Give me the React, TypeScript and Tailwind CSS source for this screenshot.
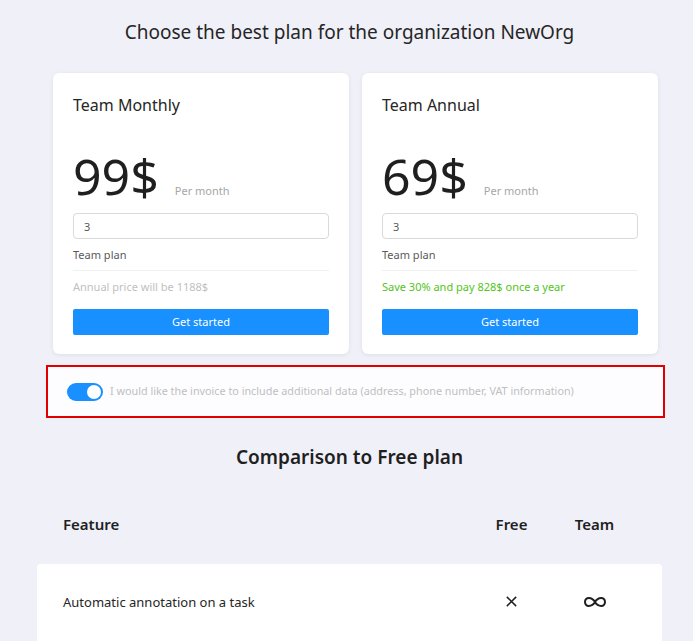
import React, { useState } from 'react';

const font = { fontFamily: '"Noto Sans", "Open Sans", sans-serif' };

interface PlanCardProps {
  title: string;
  price: string;
  note: string;
  noteClass: string;
}

function PlanCard({ title, price, note, noteClass }: PlanCardProps) {
  return (
    <div className="flex-1 bg-white rounded-md shadow-[0_1px_4px_rgba(0,0,0,0.08)] px-5 pt-[19px] pb-[19px]">
      <div className="text-[16px] leading-[26px] text-[#262626]">{title}</div>
      <div className="flex items-end mt-[23px] h-[64px]">
        <span className="text-[50px] leading-[52px] text-[#1f1f1f] mb-[3px]">{price}</span>
        <span className="text-[11px] text-[#a6a6a6] ml-[16px] mb-[6px]">Per month</span>
      </div>
      <input
        defaultValue="3"
        className="mt-[8px] w-full h-[26px] border border-[#d9d9d9] rounded-[4px] px-[10px] text-[11px] text-[#595959] outline-none"
      />
      <div className="text-[11px] leading-[18px] text-[#595959] mt-[7px] pb-[6px] border-b border-[#f0f0f0]">Team plan</div>
      <div className={`text-[11px] leading-[18px] mt-[7px] ${noteClass}`}>{note}</div>
      <button className="mt-[13px] w-full h-[26px] bg-[#1890ff] text-white text-[11px] rounded-[2px]">Get started</button>
    </div>
  );
}

export default function App() {
  const [checked, setChecked] = useState(true);

  return (
    <div className="min-h-screen bg-[#f0f0f8] overflow-hidden" style={font}>
      <div className="ml-[37px] w-[625px] pt-[18px]">
        <h1 className="text-center text-[19px] leading-[28px] text-[#262626]">
          Choose the best plan for the organization NewOrg
        </h1>
      </div>

      <div className="ml-[53px] w-[605px] mt-[27px] flex gap-[13px]">
        <PlanCard
          title="Team Monthly"
          price="99$"
          note="Annual price will be 1188$"
          noteClass="text-[#bfbfbf]"
        />
        <PlanCard
          title="Team Annual"
          price="69$"
          note="Save 30% and pay 828$ once a year"
          noteClass="text-[#52c41a]"
        />
      </div>

      <div className="ml-[46px] w-[619px] mt-[11px] h-[53px] border-2 border-[#e00000] flex items-center px-[19px] bg-[#fdfdff]">
        <button
          onClick={() => setChecked(!checked)}
          className={`relative w-[36px] h-[18px] rounded-full ${checked ? 'bg-[#1890ff]' : 'bg-[#bfbfbf]'}`}
        >
          <span className={`absolute top-[2px] w-[14px] h-[14px] rounded-full bg-white ${checked ? 'right-[2px]' : 'left-[2px]'}`} />
        </button>
        <span className="ml-[7px] text-[10.8px] text-[#bfbfbf]">
          I would like the invoice to include additional data (address, phone number, VAT information)
        </span>
      </div>

      <div className="ml-[37px] w-[625px]">
        <h2 className="text-center text-[19px] leading-[28px] font-semibold text-[#1f1f1f] mt-[25px]">
          Comparison to Free plan
        </h2>

        <div className="flex items-center h-[42px] mt-[32px] px-[26px] text-[15px] font-semibold text-[#1f1f1f]">
          <div className="flex-1">Feature</div>
          <div className="w-[83px] text-center">Free</div>
          <div className="w-[83px] text-center">Team</div>
        </div>

        <div className="mt-[19px] bg-white rounded-[4px] h-[90px] flex items-start pt-[26px] px-[26px] text-[13px] text-[#262626]">
          <div className="flex-1 leading-[24px]">Automatic annotation on a task</div>
          <div className="w-[83px] flex justify-center pt-[5px]">
            <svg width="13" height="13" viewBox="0 0 14 14" fill="none" stroke="#1f1f1f" strokeWidth="1.6">
              <path d="M2 2 L12 12 M12 2 L2 12" />
            </svg>
          </div>
          <div className="w-[83px] flex justify-center pt-[4px]">
            <svg width="26" height="16" viewBox="0 0 26 16" fill="none" stroke="#1f1f1f" strokeWidth="2">
              <path d="M13 8 C10 3 3 2.5 3 8 C3 13.5 10 13 13 8 C16 3 23 2.5 23 8 C23 13.5 16 13 13 8 Z" />
            </svg>
          </div>
        </div>
      </div>
    </div>
  );
}
